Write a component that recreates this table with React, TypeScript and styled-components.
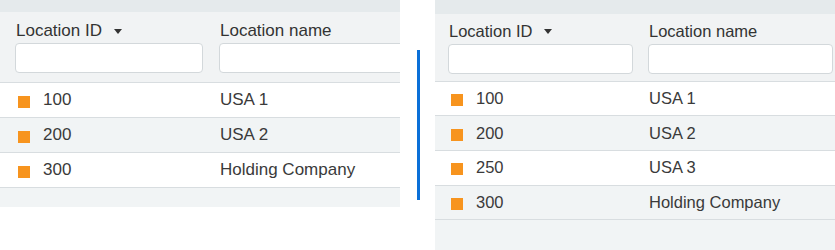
import React from 'react';
import styled, { createGlobalStyle } from 'styled-components';

const GlobalStyle = createGlobalStyle`
  html, body {
    margin: 0;
    padding: 0;
    background: #ffffff;
    font-family: "Liberation Sans", Arial, sans-serif;
    color: #333333;
  }
  * {
    box-sizing: border-box;
  }
`;

const Page = styled.div`
  display: flex;
  width: 835px;
  height: 250px;
  overflow: hidden;
`;

const Divider = styled.div`
  width: 35px;
  display: flex;
  justify-content: center;
  padding-top: 50px;
`;

const BlueLine = styled.div`
  width: 3px;
  height: 150px;
  background: #0a70d8;
  margin-left: 1px;
`;

const Panel = styled.div<{ $fontSize: number }>`
  width: 400px;
  display: flex;
  flex-direction: column;
  overflow: hidden;
  font-size: ${p => p.$fontSize}px;
`;

const TopBand = styled.div<{ $height: number }>`
  height: ${p => p.$height}px;
  background: #e5eaec;
`;

// shared column layout for header and body rows
const Columns = styled.div<{ $inset: number; $col: number }>`
  display: grid;
  grid-template-columns: ${p => p.$col}px 1fr;
  padding-left: ${p => p.$inset}px;
`;

const Header = styled(Columns)<{ $height: number; $top: number }>`
  height: ${p => p.$height}px;
  background: #f1f3f4;
  border-bottom: 1px solid #d8dde0;
  padding-top: ${p => p.$top}px;
  overflow: hidden;
`;

const HeaderCell = styled.div`
  display: flex;
  flex-direction: column;
  gap: 3px;
`;

const HeaderLabel = styled.div`
  display: flex;
  align-items: center;
  height: 18px;
  padding-left: 1px;
  color: #333333;
  white-space: nowrap;
`;

const Caret = styled.span`
  display: inline-block;
  margin-left: 12px;
  border-left: 4px solid transparent;
  border-right: 4px solid transparent;
  border-top: 5px solid #333333;
`;

const FilterInput = styled.div<{ $width: number }>`
  height: 30px;
  width: ${p => p.$width}px;
  flex-shrink: 0;
  background: #ffffff;
  border: 1px solid #d3d8db;
  border-radius: 4px;
`;

const Row = styled(Columns)<{ $shaded: boolean }>`
  height: 35px;
  align-items: center;
  background: ${p => (p.$shaded ? '#f1f4f5' : '#ffffff')};
  border-bottom: 1px solid #d8dde0;
  color: #3a3a3a;
  white-space: nowrap;
`;

const IdCell = styled.div`
  display: flex;
  align-items: center;
  padding-left: 3px;
`;

const Marker = styled.span`
  width: 12px;
  height: 12px;
  background: #f7941e;
  margin-right: 13px;
  margin-top: 3px;
`;

const NameCell = styled.div`
  padding-left: 1px;
`;

const Footer = styled.div<{ $height: number }>`
  height: ${p => p.$height}px;
  flex-shrink: 0;
  background: #f1f4f5;
`;

type Location = { id: string; name: string };

const before: Location[] = [
  { id: '100', name: 'USA 1' },
  { id: '200', name: 'USA 2' },
  { id: '300', name: 'Holding Company' },
];

const after: Location[] = [
  { id: '100', name: 'USA 1' },
  { id: '200', name: 'USA 2' },
  { id: '250', name: 'USA 3' },
  { id: '300', name: 'Holding Company' },
];

type GridProps = {
  rows: Location[];
  inset: number;
  col: number;
  band: number;
  headerHeight: number;
  headerTop: number;
  inputs: [number, number];
  footer: number;
  fontSize: number;
};

const LocationGrid: React.FC<GridProps> = ({
  rows, inset, col, band, headerHeight, headerTop, inputs, footer, fontSize,
}) => (
  <Panel $fontSize={fontSize}>
    <TopBand $height={band} />
    <Header $inset={inset} $col={col} $height={headerHeight} $top={headerTop}>
      <HeaderCell>
        <HeaderLabel>
          Location ID <Caret />
        </HeaderLabel>
        <FilterInput $width={inputs[0]} />
      </HeaderCell>
      <HeaderCell>
        <HeaderLabel>Location name</HeaderLabel>
        <FilterInput $width={inputs[1]} />
      </HeaderCell>
    </Header>
    {rows.map((row, i) => (
      <Row key={row.id} $inset={inset} $col={col} $shaded={i % 2 === 1}>
        <IdCell>
          <Marker />
          {row.id}
        </IdCell>
        <NameCell>{row.name}</NameCell>
      </Row>
    ))}
    <Footer $height={footer} />
  </Panel>
);

export default function App() {
  return (
    <>
      <GlobalStyle />
      <Page>
        <LocationGrid
          rows={before}
          inset={15}
          col={204}
          band={12}
          headerHeight={71}
          headerTop={10}
          inputs={[188, 200]}
          footer={19}
          fontSize={17}
        />
        <Divider>
          <BlueLine />
        </Divider>
        <LocationGrid
          rows={after}
          inset={13}
          col={200}
          band={14}
          headerHeight={69}
          headerTop={9}
          inputs={[185, 185]}
          footer={30}
          fontSize={16.5}
        />
      </Page>
    </>
  );
}
